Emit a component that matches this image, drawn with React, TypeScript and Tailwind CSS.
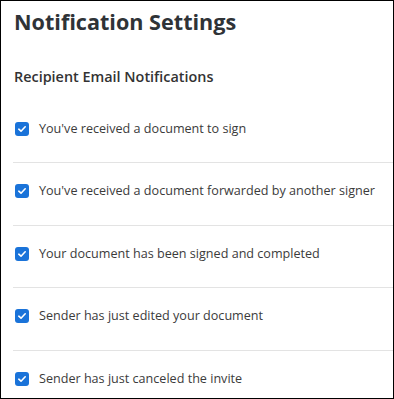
import React from "react";

const items = [
  "You've received a document to sign",
  "You've received a document forwarded by another signer",
  "Your document has been signed and completed",
  "Sender has just edited your document",
  "Sender has just canceled the invite",
];

function Check() {
  return (
    <span className="flex h-[14px] w-[14px] shrink-0 items-center justify-center rounded-[3px] bg-[#1a73d9]">
      <svg width="10" height="10" viewBox="0 0 10 10" fill="none">
        <path d="M1.8 5.2 L4 7.2 L8.2 2.8" stroke="white" strokeWidth="1.6" strokeLinecap="round" strokeLinejoin="round" />
      </svg>
    </span>
  );
}

export default function App() {
  return (
    <div
      className="h-[399px] w-[394px] overflow-hidden border border-black bg-white pl-[12px]"
      style={{ fontFamily: '"Open Sans", sans-serif' }}
    >
      <h1 className="mt-[5.5px] pl-[1px] text-[21.6px] font-bold leading-[30px] text-[#2f3337]">
        Notification Settings
      </h1>
      <h2 className="mt-[30px] pl-[1px] text-[14.4px] font-semibold leading-[20px] text-[#333]">
        Recipient Email Notifications
      </h2>
      <div className="mt-[14px]">
        {items.map((t, i) => (
          <div
            key={t}
            className={
              "h-[62.5px] pl-[2px] pt-[19px] " +
              (i < items.length - 1 ? "border-b border-[#e3e3e3]" : "")
            }
          >
            <div className="flex h-[18px] items-center gap-[10px]">
              <Check />
              <span className="text-[12.6px] leading-[18px] text-[#3b3b3b]">{t}</span>
            </div>
          </div>
        ))}
      </div>
    </div>
  );
}
